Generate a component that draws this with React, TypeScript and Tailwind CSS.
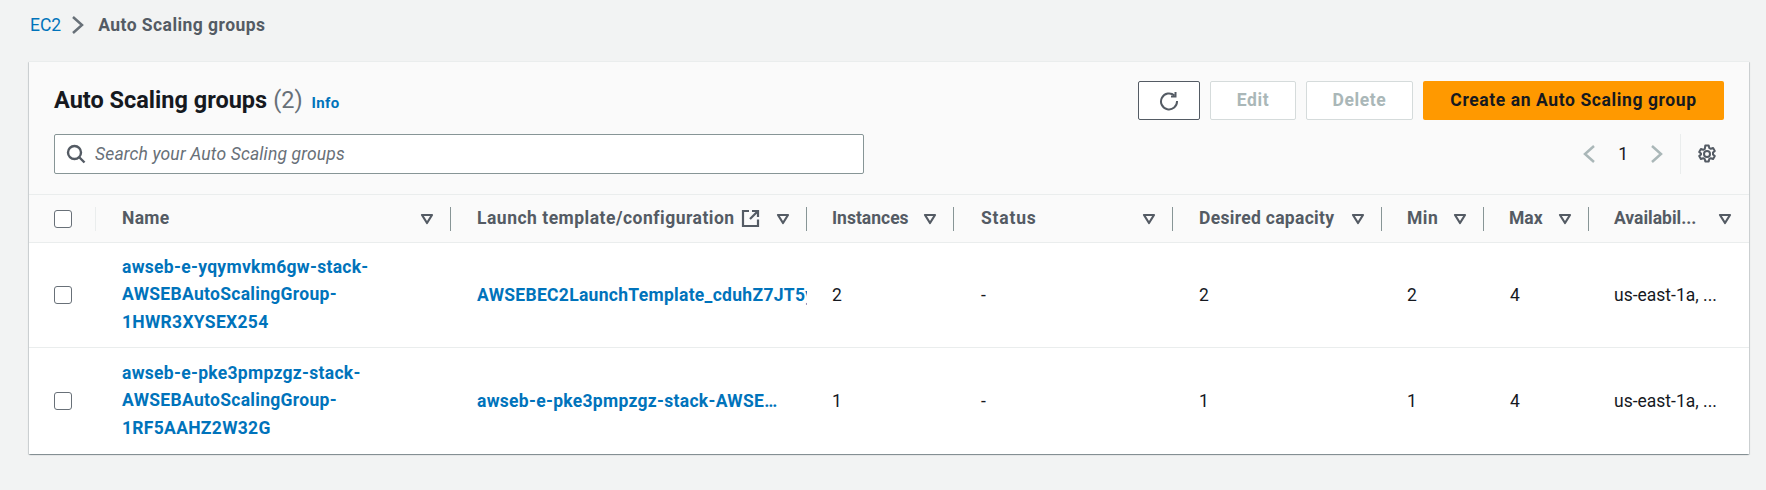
import React from "react";

const COLS = "grid grid-cols-[67px_355px_356px_147px_219px_209px_102px_105px_160px]";

function SortIcon() {
  return (
    <svg width="14" height="12" viewBox="0 0 14 12" className="shrink-0">
      <path d="M2 2h10L7 10z" fill="none" stroke="#545b64" strokeWidth="2.2" strokeLinejoin="round" />
    </svg>
  );
}

function Checkbox() {
  return <div className="w-[18px] h-[18px] rounded-[3px] border border-[#687078] bg-white" />;
}

function HeadCell({ label, sep = true, ext = false, cls = "pl-[26px] tracking-[0.3px]" }: { label: string; sep?: boolean; ext?: boolean; cls?: string }) {
  return (
    <div className={`relative flex items-center justify-between h-full pr-[17px] min-w-0 ${cls}`}>
      <span className="flex items-center gap-[6px] whitespace-nowrap">
        {label}
        {ext && (
          <svg width="19" height="19" viewBox="0 0 19 19" fill="none" stroke="#545b64" strokeWidth="2.2">
            <path d="M8 2H2v15h15v-6.500M11 2h6v6M17 2L9 10" />
          </svg>
        )}
      </span>
      <SortIcon />
      {sep && <span className="absolute right-0 top-[12px] h-[24px] w-px bg-[#879596]" />}
    </div>
  );
}

function Row({ name, tmpl, inst, desired, min, max }: { name: string[]; tmpl: string; inst: string; desired: string; min: string; max: string }) {
  return (
    <div className={`${COLS} items-center h-[105px] border-b border-[#eaeded] last:border-b-0 bg-white last:h-[106px]`}>
      <div className="pl-[25px]"><Checkbox /></div>
      <div className="pl-[26px] font-bold text-[#0073bb] leading-[27.5px] tracking-[0.3px]">
        {name.map((n) => <div key={n} className="whitespace-nowrap">{n}</div>)}
      </div>
      <div className="pl-[26px] font-bold text-[#0073bb] overflow-hidden whitespace-nowrap tracking-[0.3px]">{tmpl}</div>
      <div className="pl-[25px]">{inst}</div>
      <div className="pl-[27px]">-</div>
      <div className="pl-[26px]">{desired}</div>
      <div className="pl-[25px]">{min}</div>
      <div className="pl-[26px]">{max}</div>
      <div className="pl-[25px] whitespace-nowrap">us-east-1a, ...</div>
    </div>
  );
}

export default function App() {
  return (
    <div className="min-h-screen bg-[#f2f3f3] pl-[29px] pr-[17px] pt-[13px] text-[17.5px] text-[#16191f] font-['Roboto',sans-serif]">
      <nav className="flex items-center h-[24px] pl-[1px] text-[#545b64]">
        <span className="text-[#0073bb]">EC2</span>
        <svg width="16" height="20" viewBox="0 0 16 20" fill="none" stroke="#687078" strokeWidth="2.5" className="ml-[9px] mr-[12px]">
          <path d="M3 2l9 8-9 8" />
        </svg>
        <span className="font-bold tracking-[0.45px]">Auto Scaling groups</span>
      </nav>

      <div className="mt-[24px] rounded-[1px] shadow-[0_1px_1px_0_rgba(0,28,36,0.3),1px_1px_1px_0_rgba(0,28,36,0.15),-1px_1px_1px_0_rgba(0,28,36,0.15)]">
        <div className="bg-[#fafafa] h-[133px] pl-[25px] pr-[25px] pt-[19px] border-t border-[#eaeded]">
          <div className="flex items-center justify-between h-[39px]">
            <div className="flex items-baseline">
              <h1 className="text-[23.5px] font-bold">Auto Scaling groups</h1>
              <span className="text-[23.5px] text-[#687078] ml-[6px]">(2)</span>
              <a className="text-[15px] font-bold text-[#0073bb] ml-[9px] tracking-[0.3px]">Info</a>
            </div>
            <div className="flex items-center gap-[10px] font-bold h-full tracking-[0.6px]">
              <button className="w-[62px] h-full flex items-center justify-center bg-white rounded-[2px] border border-[#545b64]">
                <svg width="20" height="20" viewBox="0 0 20 20" fill="none" stroke="#545b64" strokeWidth="2">
                  <path d="M15.5 4.600A8 8 0 1 0 18 10" />
                  <path d="M16.5 1v4.500H12" />
                </svg>
              </button>
              <button className="w-[86px] h-full bg-white rounded-[2px] border border-[#d5dbdb] text-[#aab7b8]">Edit</button>
              <button className="w-[107px] h-full bg-white rounded-[2px] border border-[#d5dbdb] text-[#aab7b8]">Delete</button>
              <button className="w-[301px] h-full bg-[#ff9900] rounded-[2px]">Create an Auto Scaling group</button>
            </div>
          </div>
          <div className="flex items-center justify-between mt-[14px] h-[40px]">
            <div className="w-[810px] h-[40px] flex items-center gap-[9px] pl-[11px] bg-white rounded-[2px] border border-[#879596]">
              <svg width="20" height="20" viewBox="0 0 20 20" fill="none" stroke="#545b64" strokeWidth="2.4">
                <circle cx="8.500" cy="8.500" r="6.500" />
                <path d="M13.500 13.500l5 5" />
              </svg>
              <span className="italic text-[#687078] tracking-[0.15px]">Search your Auto Scaling groups</span>
            </div>
            <div className="flex items-center h-[40px] pr-[7px] text-[#16191f]">
              <svg width="16" height="20" viewBox="0 0 16 20" fill="none" stroke="#aab7b8" strokeWidth="2.5">
                <path d="M12 2l-9 8 9 8" />
              </svg>
              <span className="mx-[20px]">1</span>
              <svg width="16" height="20" viewBox="0 0 16 20" fill="none" stroke="#aab7b8" strokeWidth="2.5">
                <path d="M4 2l9 8-9 8" />
              </svg>
              <span className="w-px h-[40px] bg-[#eaeded] ml-[16px] mr-[16px]" />
              <svg width="20" height="20" viewBox="0 0 20 20" fill="none" stroke="#545b64" strokeWidth="2" strokeLinejoin="round">
                <circle cx="10" cy="10" r="3" />
                <path d="M8.300 1.500h3.400l.5 2.400 1.600.9 2.300-.8 1.700 3-1.800 1.600v1.800l1.800 1.600-1.700 3-2.300-.8-1.600.9-.5 2.400H8.300l-.5-2.400-1.600-.9-2.300.8-1.700-3 1.800-1.600V9.600L2.200 8l1.700-3 2.300.8 1.600-.9z" />
              </svg>
            </div>
          </div>
        </div>

        <div className={`${COLS} items-center h-[49px] bg-[#fafafa] border-y border-[#eaeded] font-bold text-[#545b64]`}>
          <div className="relative pl-[25px] h-full flex items-center">
            <Checkbox />
            <span className="absolute right-0 top-[12px] h-[24px] w-px bg-[#eaeded]" />
          </div>
          <HeadCell label="Name" />
          <HeadCell label="Launch template/configuration" ext cls="pl-[26px] tracking-[0.5px]" />
          <HeadCell label="Instances" cls="pl-[25px]" />
          <HeadCell label="Status" cls="pl-[27px] tracking-[0.8px]" />
          <HeadCell label="Desired capacity" />
          <HeadCell label="Min" cls="pl-[25px] tracking-[0.5px]" />
          <HeadCell label="Max" cls="pl-[25px]" />
          <HeadCell label="Availabil..." sep={false} cls="pl-[25px]" />
        </div>

        <Row name={["awseb-e-yqymvkm6gw-stack-", "AWSEBAutoScalingGroup-", "1HWR3XYSEX254"]} tmpl="AWSEBEC2LaunchTemplate_cduhZ7JT5y" inst="2" desired="2" min="2" max="4" />
        <Row name={["awseb-e-pke3pmpzgz-stack-", "AWSEBAutoScalingGroup-", "1RF5AAHZ2W32G"]} tmpl="awseb-e-pke3pmpzgz-stack-AWSE…" inst="1" desired="1" min="1" max="4" />
      </div>
    </div>
  );
}
